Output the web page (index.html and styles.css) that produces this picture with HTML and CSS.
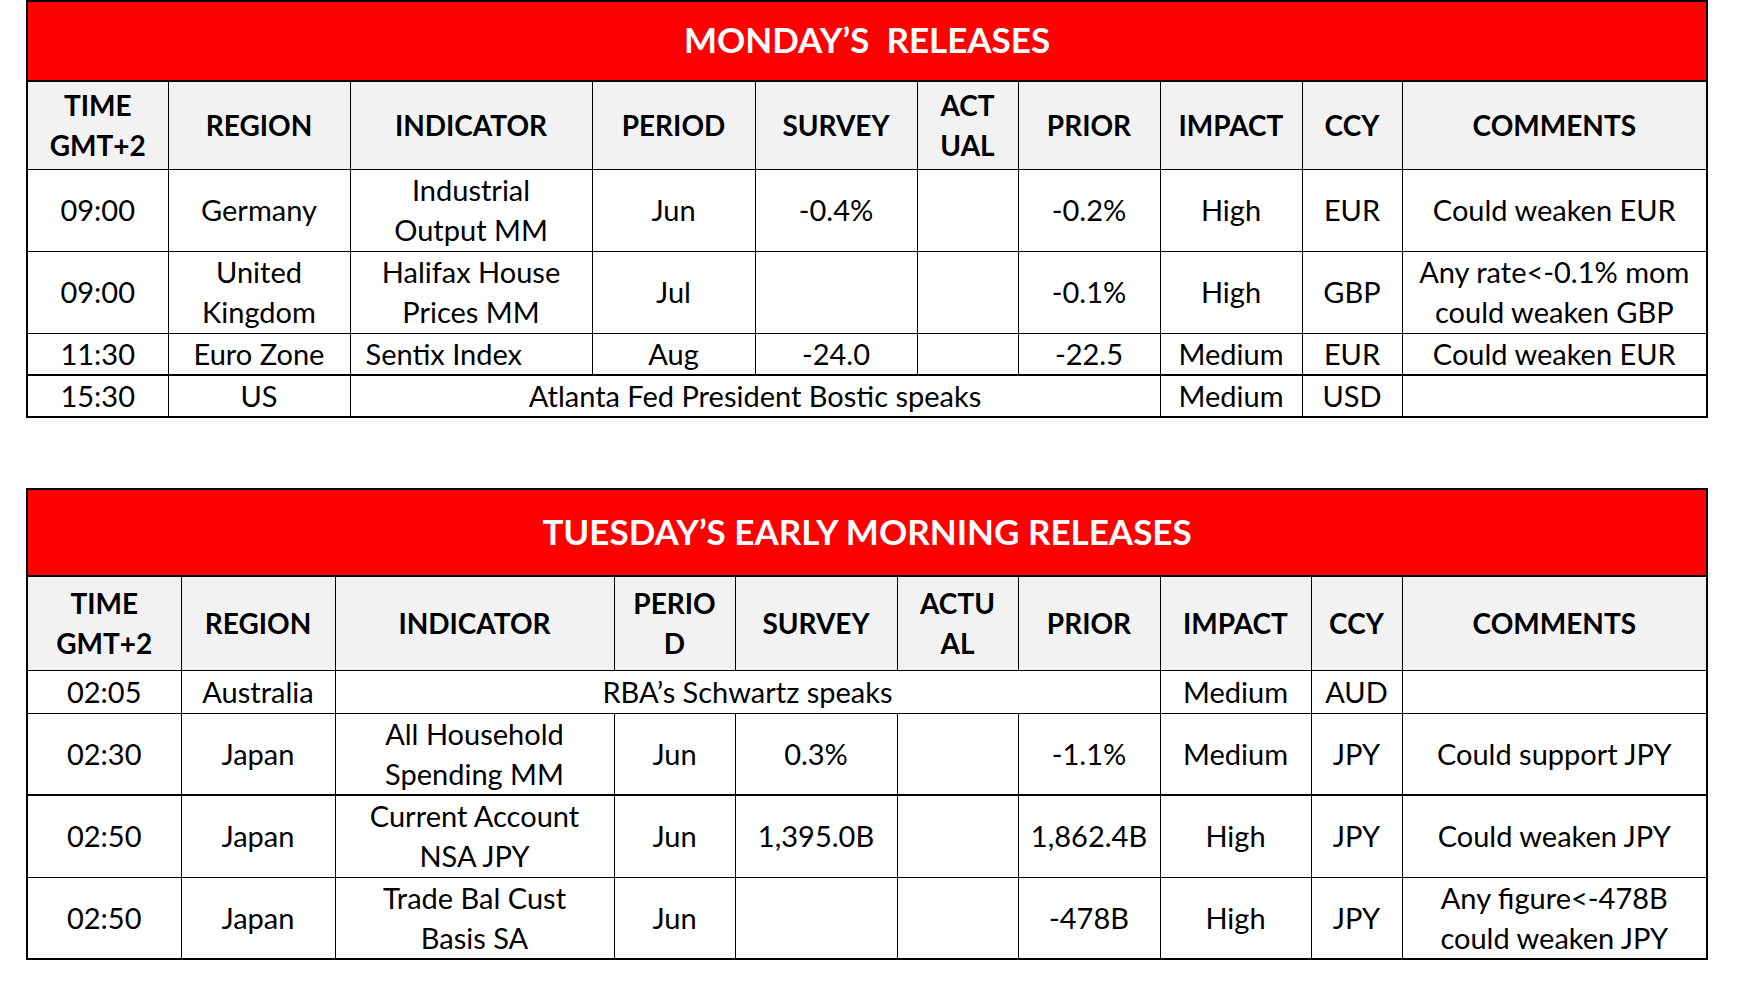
FILE: index.html
```html
<!DOCTYPE html>
<html lang="en">
<head>
<meta charset="utf-8">
<title>Releases</title>
<link rel="stylesheet" href="styles.css">
</head>
<body>
<main class="page">
  <table class="cal cal-mon">
    <colgroup>
      <col class="w141"><col class="w182"><col class="w242"><col class="w163"><col class="w162"><col class="w101"><col class="w142"><col class="w142"><col class="w100"><col class="w305">
    </colgroup>
    <tr class="title-row"><th colspan="10" class="title">MONDAY’S&nbsp; RELEASES</th></tr>
    <tr class="head-row head-mon">
      <th>TIME<br>GMT+2</th><th>REGION</th><th>INDICATOR</th><th>PERIOD</th><th>SURVEY</th><th>ACT<br>UAL</th><th>PRIOR</th><th>IMPACT</th><th>CCY</th><th>COMMENTS</th>
    </tr>
    <tr class="r2">
      <td>09:00</td><td>Germany</td><td>Industrial<br>Output MM</td><td>Jun</td><td>-0.4%</td><td></td><td>-0.2%</td><td>High</td><td>EUR</td><td>Could weaken EUR</td>
    </tr>
    <tr class="r2">
      <td>09:00</td><td>United<br>Kingdom</td><td>Halifax House<br>Prices MM</td><td>Jul</td><td></td><td></td><td>-0.1%</td><td>High</td><td>GBP</td><td>Any rate&lt;-0.1% mom<br>could weaken GBP</td>
    </tr>
    <tr class="r1">
      <td>11:30</td><td>Euro Zone</td><td class="left">Sentix Index</td><td>Aug</td><td>-24.0</td><td></td><td>-22.5</td><td>Medium</td><td>EUR</td><td>Could weaken EUR</td>
    </tr>
    <tr class="r1 thick-top">
      <td>15:30</td><td>US</td><td colspan="5">Atlanta Fed President Bostic speaks</td><td>Medium</td><td>USD</td><td></td>
    </tr>
  </table>

  <table class="cal cal-tue">
    <colgroup>
      <col class="w154"><col class="w154"><col class="w279"><col class="w121"><col class="w162"><col class="w121"><col class="w142"><col class="w151"><col class="w91"><col class="w305">
    </colgroup>
    <tr class="title-row title-tue"><th colspan="10" class="title">TUESDAY’S EARLY MORNING RELEASES</th></tr>
    <tr class="head-row head-tue">
      <th>TIME<br>GMT+2</th><th>REGION</th><th>INDICATOR</th><th>PERIO<br>D</th><th>SURVEY</th><th>ACTU<br>AL</th><th>PRIOR</th><th>IMPACT</th><th>CCY</th><th>COMMENTS</th>
    </tr>
    <tr class="r1 r1-tue">
      <td>02:05</td><td>Australia</td><td colspan="5">RBA’s Schwartz speaks</td><td>Medium</td><td>AUD</td><td></td>
    </tr>
    <tr class="r2">
      <td>02:30</td><td>Japan</td><td>All Household<br>Spending MM</td><td>Jun</td><td>0.3%</td><td></td><td>-1.1%</td><td>Medium</td><td>JPY</td><td>Could support JPY</td>
    </tr>
    <tr class="r2 thick-top">
      <td>02:50</td><td>Japan</td><td>Current Account<br>NSA JPY</td><td>Jun</td><td>1,395.0B</td><td></td><td>1,862.4B</td><td>High</td><td>JPY</td><td>Could weaken JPY</td>
    </tr>
    <tr class="r2">
      <td>02:50</td><td>Japan</td><td>Trade Bal Cust<br>Basis SA</td><td>Jun</td><td></td><td></td><td>-478B</td><td>High</td><td>JPY</td><td>Any figure&lt;-478B<br>could weaken JPY</td>
    </tr>
  </table>
</main>
</body>
</html>
```

FILE: styles.css
```css
html, body {
  margin: 0;
  padding: 0;
  background: #ffffff;
}

.page {
  padding: 0 0 0 26px;
  display: flex;
  flex-direction: column;
  gap: 70px;
  font-family: Lato, "Open Sans", sans-serif;
  color: #000000;
}

.cal {
  width: 1680px;
  table-layout: fixed;
  border-collapse: collapse;
  border: 2px solid #000000;
}

.cal td,
.cal th {
  border: 1px solid #000000;
  padding: 0;
  text-align: center;
  vertical-align: middle;
  font-size: 29px;
  line-height: 40px;
  white-space: nowrap;
  overflow: hidden;
}

.cal td {
  font-weight: 400;
}

.cal .title {
  background: #ff0000;
  color: #ffffff;
  font-weight: 700;
  font-size: 35px;
  line-height: 40px;
  white-space: pre;
  border: 2px solid #000000;
  padding-bottom: 4px;
}

.title-row { height: 80px; }
.title-tue { height: 87px; }

.head-row th {
  background: #f2f2f2;
  font-weight: 700;
  font-size: 28px;
}

.head-mon { height: 88px; }
.head-tue { height: 94px; }

.r2 { height: 82px; }
.r1 { height: 42px; }
.r1-tue { height: 43px; }

.thick-top td { border-top-width: 2px; }

.cal td.left {
  text-align: left;
  padding-left: 15px;
}

.w91 { width: 91px; }
.w100 { width: 100px; }
.w101 { width: 101px; }
.w121 { width: 121px; }
.w141 { width: 141px; }
.w142 { width: 142px; }
.w151 { width: 151px; }
.w154 { width: 154px; }
.w162 { width: 162px; }
.w163 { width: 163px; }
.w182 { width: 182px; }
.w242 { width: 242px; }
.w279 { width: 279px; }
.w305 { width: 305px; }
```
